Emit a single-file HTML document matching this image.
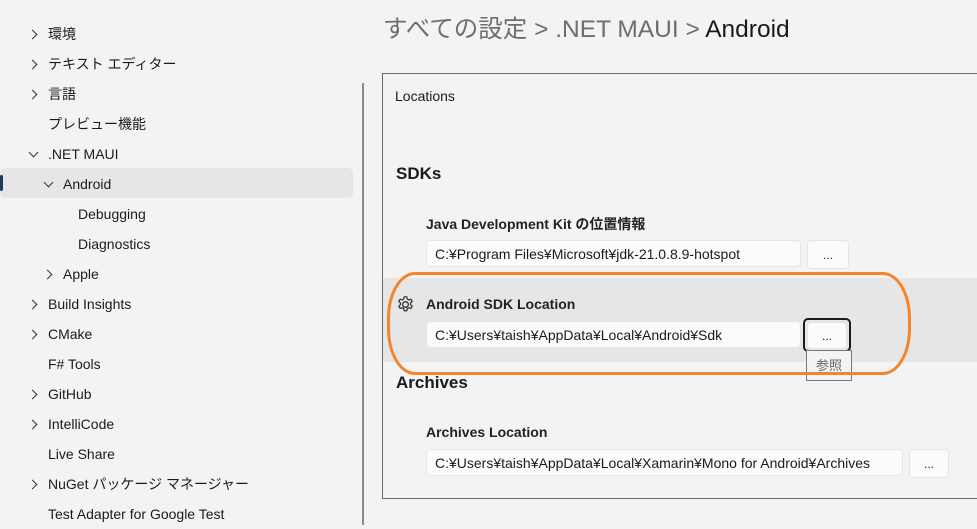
<!DOCTYPE html>
<html><head><meta charset="utf-8"><style>
body{margin:0;width:977px;height:525px;background:#f3f3f3;font-family:"Liberation Sans","Noto Sans CJK JP",sans-serif;color:#1b1b1b;position:relative;overflow:hidden}
.a{position:absolute;white-space:nowrap}
.it{position:absolute;font-size:14px;line-height:30px;height:30px;white-space:nowrap}
.ch{position:absolute;width:6px;height:6px;border-right:1.3px solid #333;border-bottom:1.3px solid #333}
.r{transform:rotate(-45deg)}
.d{transform:rotate(45deg)}
.f{position:absolute;background:#fbfbfb;border:1px solid #e5e5e5;border-radius:4px;height:27px;font-size:14px;line-height:27px;padding-left:8px;box-sizing:border-box;white-space:nowrap;overflow:hidden}
.b{position:absolute;background:#fbfbfb;border:1px solid #e5e5e5;border-radius:4px;height:29px;font-size:12px;text-align:center;line-height:29px;box-sizing:border-box}
.lb{position:absolute;font-size:14px;font-weight:bold;color:#222}
</style></head><body>
<div class="a" style="left:0;top:168px;width:353px;height:30px;background:#e6e6e6;border-radius:5px"></div>
<div class="a" style="left:0;top:175px;width:3px;height:16px;background:#1e3a5a;border-radius:2px"></div>
<div class="a" style="left:362px;top:83px;width:2px;height:442px;background:#8a8a8a"></div>

<div class="ch r" style="left:29px;top:31px"></div><div class="it" style="left:48px;top:19px">環境</div>
<div class="ch r" style="left:29px;top:61px"></div><div class="it" style="left:48px;top:49px">テキスト エディター</div>
<div class="ch r" style="left:29px;top:91px"></div><div class="it" style="left:48px;top:79px">言語</div>
<div class="it" style="left:48px;top:109px">プレビュー機能</div>
<div class="ch d" style="left:30px;top:149px"></div><div class="it" style="left:48px;top:139px">.NET MAUI</div>
<div class="ch d" style="left:45px;top:179px"></div><div class="it" style="left:63px;top:169px">Android</div>
<div class="it" style="left:78px;top:199px">Debugging</div>
<div class="it" style="left:78px;top:229px">Diagnostics</div>
<div class="ch r" style="left:44px;top:271px"></div><div class="it" style="left:63px;top:259px">Apple</div>
<div class="ch r" style="left:29px;top:301px"></div><div class="it" style="left:48px;top:289px">Build Insights</div>
<div class="ch r" style="left:29px;top:331px"></div><div class="it" style="left:48px;top:319px">CMake</div>
<div class="it" style="left:48px;top:349px">F# Tools</div>
<div class="ch r" style="left:29px;top:391px"></div><div class="it" style="left:48px;top:379px">GitHub</div>
<div class="ch r" style="left:29px;top:421px"></div><div class="it" style="left:48px;top:409px">IntelliCode</div>
<div class="it" style="left:48px;top:439px">Live Share</div>
<div class="ch r" style="left:29px;top:481px"></div><div class="it" style="left:48px;top:469px">NuGet パッケージ マネージャー</div>
<div class="it" style="left:48px;top:499px">Test Adapter for Google Test</div>

<div class="a" style="left:383px;top:10px;font-size:24.5px;color:#6e6e6e">すべての設定 &gt; .NET MAUI &gt; <span style="color:#1a1a1a">Android</span></div>

<div class="a" style="left:382px;top:73px;width:600px;height:424px;border:1px solid #6a6a6a"></div>
<div class="a" style="left:383px;top:278px;width:594px;height:84px;background:#e6e6e6"></div>
<div class="a" style="left:395px;top:88px;font-size:14px">Locations</div>
<div class="a" style="left:396px;top:164px;font-size:17px;font-weight:bold">SDKs</div>
<div class="lb" style="left:426px;top:214px">Java Development Kit の位置情報</div>
<div class="f" style="left:426px;top:240px;width:375px">C:¥Program Files¥Microsoft¥jdk-21.0.8.9-hotspot</div>
<div class="b" style="left:807px;top:240px;width:42px">...</div>
<svg class="a" style="left:396px;top:295px" width="19" height="19" viewBox="0 0 20 20"><circle cx="10" cy="10" r="3" fill="none" stroke="#333" stroke-width="1.4"/><path d="M8.6 2h2.8l.5 2.3 1.6.9 2.2-.8 1.4 2.4-1.8 1.6v1.8l1.8 1.6-1.4 2.4-2.2-.8-1.6.9-.5 2.3H8.6l-.5-2.3-1.6-.9-2.2.8-1.4-2.4 1.8-1.6V8.4L2.9 6.8l1.4-2.4 2.2.8 1.6-.9z" fill="none" stroke="#333" stroke-width="1.3" stroke-linejoin="round"/></svg>
<div class="lb" style="left:426px;top:296px">Android SDK Location</div>
<div class="f" style="left:426px;top:321px;width:375px">C:¥Users¥taish¥AppData¥Local¥Android¥Sdk</div>
<div class="a" style="left:803px;top:318px;width:48px;height:34px;border:2px solid #1a1a1a;border-radius:5px;box-sizing:border-box"></div>
<div class="b" style="left:807px;top:322px;width:40px;height:27px;line-height:27px">...</div>
<div class="a" style="left:806px;top:350px;width:46px;height:31px;border:1px solid #777;background:#f3f3f3;box-sizing:border-box;font-size:13px;color:#666;text-align:center;line-height:30px">参照</div>
<div class="a" style="left:387px;top:272px;width:524px;height:103px;border:3px solid #f5832a;border-radius:28px/46px;box-sizing:border-box"></div>
<div class="a" style="left:396px;top:373px;font-size:17px;font-weight:bold">Archives</div>
<div class="lb" style="left:426px;top:424px">Archives Location</div>
<div class="f" style="left:426px;top:449px;width:477px">C:¥Users¥taish¥AppData¥Local¥Xamarin¥Mono for Android¥Archives</div>
<div class="b" style="left:909px;top:449px;width:40px">...</div>
</body></html>
